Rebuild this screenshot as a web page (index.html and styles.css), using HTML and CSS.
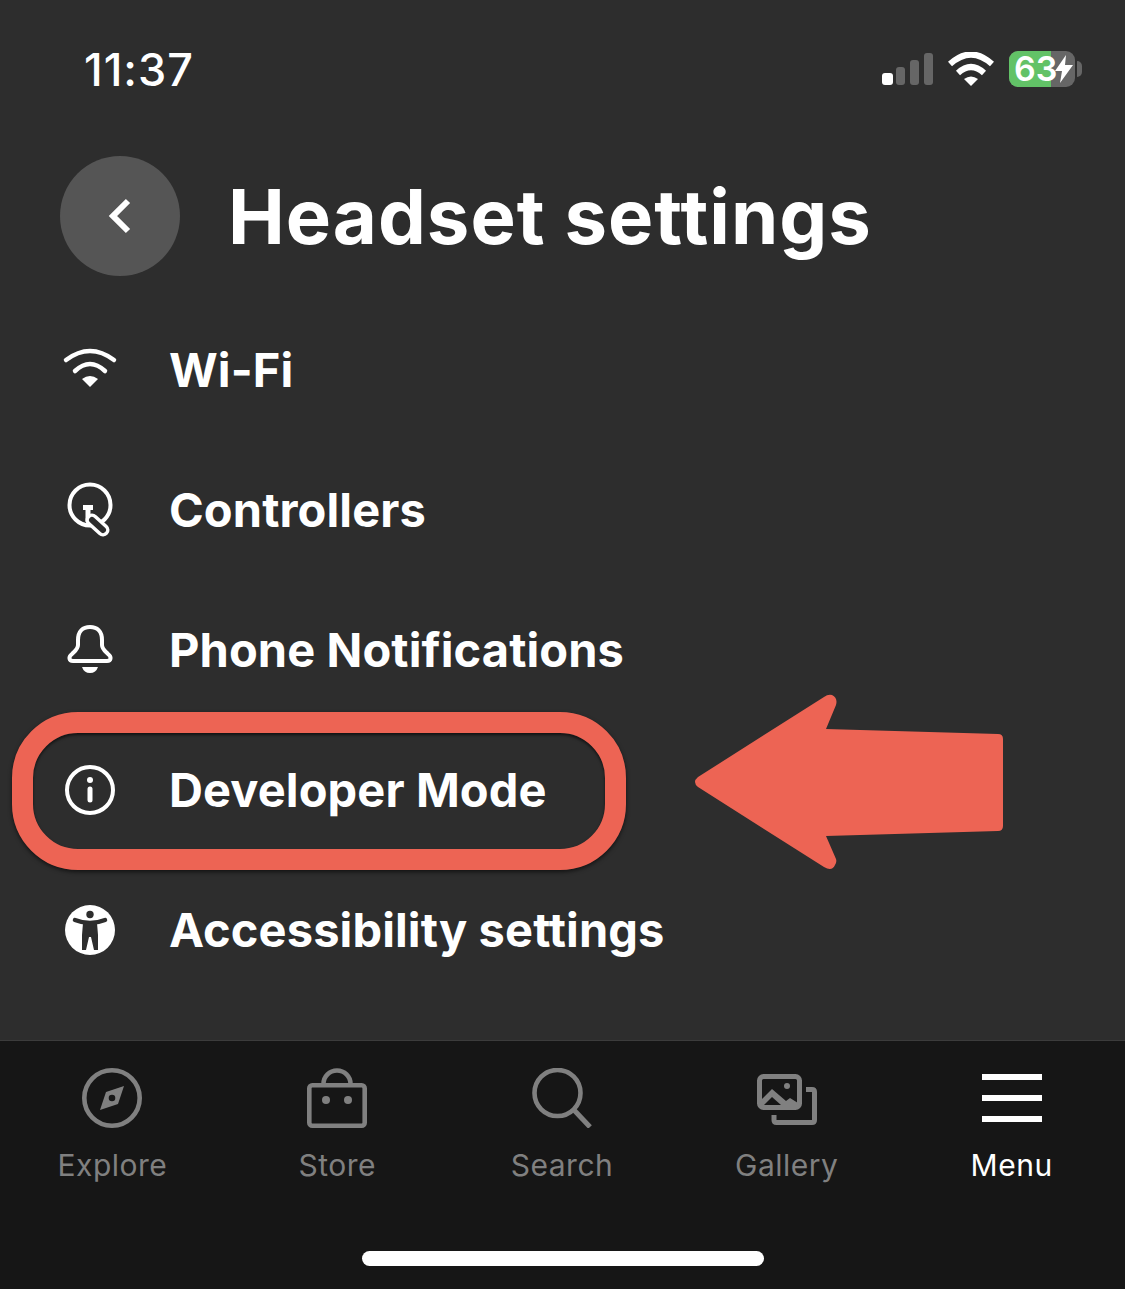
FILE: index.html
```html
<!DOCTYPE html>
<html>
<head>
    <title>Headset settings</title>
    <link rel="stylesheet" href="styles.css">
</head>
<body>
    <div class="page">
        <div class="status-bar">
            <span class="time">11:37</span>
            <div class="status-icons">
                <svg class="signal" width="51" height="32" viewBox="0 0 51 32">
                    <rect x="0" y="20" width="11" height="12" rx="3" fill="#fff"/>
                    <rect x="14" y="14" width="9" height="18" rx="3" fill="#666"/>
                    <rect x="28" y="7" width="9" height="25" rx="3" fill="#666"/>
                    <rect x="42" y="0" width="9" height="32" rx="3" fill="#666"/>
                </svg>
                <svg class="status-wifi" width="46" height="34" viewBox="0 0 46 34">
                    <path d="M2 12 Q23 -7 44 12" fill="none" stroke="#fff" stroke-width="6"/>
                    <path d="M10 21 Q23 9 36 21" fill="none" stroke="#fff" stroke-width="6"/>
                    <path d="M16 27 Q23 22 30 27 L23 34Z" fill="#fff"/>
                </svg>
                <div class="battery">
                    <div class="battery-fill" style="width: 63%"></div>
                    <span class="battery-text">63</span>
                    <svg class="bolt" width="18" height="28" viewBox="0 0 18 28">
                        <path d="M11 0 L0 16 H7 L5 28 L18 10 H10Z" fill="#fff"/>
                    </svg>
                </div>
            </div>
        </div>

        <div class="header">
            <div class="back-btn">
                <svg width="24" height="36" viewBox="0 0 24 36">
                    <path d="M20 3 L5 18 L20 33" fill="none" stroke="#fff" stroke-width="6"/>
                </svg>
            </div>
            <h1>Headset settings</h1>
        </div>

        <div class="settings-list">
            <div class="row">
                <svg class="row-icon" width="50" height="50" viewBox="0 0 50 50">
                    <path d="M1 15 Q25 -3 49 15" fill="none" stroke="#fff" stroke-width="4.5" stroke-linecap="round"/>
                    <path d="M10 26 Q25 12 40 26" fill="none" stroke="#fff" stroke-width="4.5" stroke-linecap="round"/>
                    <path d="M17 34 Q25 28 33 34 L25 42Z" fill="#fff"/>
                </svg>
                <span>Wi-Fi</span>
            </div>
            <div class="row">
                <svg class="row-icon" width="50" height="50" viewBox="0 0 50 50">
                    <circle cx="25" cy="20" r="20.5" fill="none" stroke="#fff" stroke-width="4"/>
                    <rect x="18" y="20" width="10" height="5" fill="#fff"/>
                    <rect x="20.5" y="25" width="5" height="12" fill="#fff"/>
                    <path d="M27 35 L38 45" stroke="#fff" stroke-width="13" stroke-linecap="round"/>
                    <path d="M27 35 L38 45" stroke="#2d2d2d" stroke-width="6" stroke-linecap="round"/>
                </svg>
                <span>Controllers</span>
            </div>
            <div class="row">
                <svg class="row-icon" width="50" height="50" viewBox="0 0 50 50">
                    <path d="M13 15 C13 6 18 2 25 2 C32 2 37 6 37 15 V20 C37 24 40 26 43 29 C47 32 46 36 42 36 H8 C4 36 3 32 7 29 C10 26 13 24 13 20Z" fill="none" stroke="#fff" stroke-width="4"/>
                    <path d="M17 42 H33 Q31 48 25 48 Q19 48 17 42Z" fill="#fff"/>
                </svg>
                <span>Phone Notifications</span>
            </div>
            <div class="row">
                <svg class="row-icon" width="50" height="50" viewBox="0 0 50 50">
                    <circle cx="25" cy="25" r="23" fill="none" stroke="#fff" stroke-width="4"/>
                    <circle cx="25" cy="15" r="3" fill="#fff"/>
                    <path d="M25 24 V35" stroke="#fff" stroke-width="5" stroke-linecap="round"/>
                </svg>
                <span>Developer Mode</span>
            </div>
            <div class="row">
                <svg class="row-icon" width="50" height="50" viewBox="0 0 50 50">
                    <circle cx="25" cy="25" r="25" fill="#fff"/>
                    <circle cx="25" cy="9.5" r="3.7" fill="#2d2d2d"/>
                    <path d="M10 15 Q25 21 40 15" fill="none" stroke="#2d2d2d" stroke-width="4.5" stroke-linecap="round"/>
                    <path d="M18 18 H32 L33 30 L33 45 H29 L26 32 H24 L21 45 H17 L17 30Z" fill="#2d2d2d"/>
                </svg>
                <span>Accessibility settings</span>
            </div>
        </div>

        <div class="tab-bar">
            <div class="tabs">
                <div class="tab">
                    <svg width="60" height="60" viewBox="0 0 60 60">
                        <circle cx="30" cy="30" r="27.7" fill="none" stroke="#808080" stroke-width="4.6"/>
                        <path fill-rule="evenodd" d="M42 18 L36 36 L18 42 L24 24Z M30 26.7 A3.3 3.3 0 1 0 30 33.3 A3.3 3.3 0 1 0 30 26.7Z" fill="#808080"/>
                    </svg>
                    <span>Explore</span>
                </div>
                <div class="tab">
                    <svg width="60" height="60" viewBox="0 0 60 60">
                        <rect x="2.3" y="17.3" width="55.4" height="40.4" rx="3" fill="none" stroke="#808080" stroke-width="4.6"/>
                        <path d="M16.5 16 A13.5 13.5 0 0 1 43.5 16" fill="none" stroke="#808080" stroke-width="4.6"/>
                        <circle cx="19" cy="32" r="4" fill="#808080"/>
                        <circle cx="41" cy="32" r="4" fill="#808080"/>
                    </svg>
                    <span>Store</span>
                </div>
                <div class="tab">
                    <svg width="60" height="60" viewBox="0 0 60 60">
                        <circle cx="25.5" cy="25" r="23" fill="none" stroke="#808080" stroke-width="4.6"/>
                        <path d="M42 42 L58 59" stroke="#808080" stroke-width="5"/>
                    </svg>
                    <span>Search</span>
                </div>
                <div class="tab">
                    <svg width="60" height="60" viewBox="0 0 60 60">
                        <rect x="2.5" y="8.5" width="40" height="31" rx="4" fill="none" stroke="#808080" stroke-width="5"/>
                        <path d="M17 47 V52 Q17 54.5 19.5 54.5 H55 Q57.5 54.5 57.5 52 V24 Q57.5 21.5 55 21.5 H49" fill="none" stroke="#808080" stroke-width="5"/>
                        <path d="M5 31 L15 21 L29 33 L33 30 L41 35 V37 H5Z" fill="#808080"/>
                        <path d="M7 37 L15 29 L24 37Z" fill="#161616"/>
                        <circle cx="30" cy="18" r="3" fill="#808080"/>
                    </svg>
                    <span>Gallery</span>
                </div>
                <div class="tab active">
                    <svg width="60" height="60" viewBox="0 0 60 60">
                        <rect x="0" y="6" width="60" height="6" fill="#fff"/>
                        <rect x="0" y="27" width="60" height="6" fill="#fff"/>
                        <rect x="0" y="48" width="60" height="6" fill="#fff"/>
                    </svg>
                    <span>Menu</span>
                </div>
            </div>
            <div class="home-indicator"></div>
        </div>

        <!-- annotation drawn over the screenshot -->
        <div class="highlight-ring"></div>
        <svg class="arrow" width="320" height="190" viewBox="0 0 320 190">
            <path d="M6 82 Q0 87 6 92 L132 172 Q140 177 143 170 Q145 167 144 164 L134 141 L306 136 Q311 136 311 131 V44 Q311 39 306 39 L134 34 L144 10 Q146 3 140 0 Q136 -1 132 2Z" fill="#ed6454"/>
        </svg>
    </div>
</body>
</html>
```

FILE: styles.css
```css
* {
    box-sizing: border-box;
}
body {
    margin: 0;
    background: #2d2d2d;
    font-family: Inter, "Liberation Sans", sans-serif;
    color: #fff;
}
.page {
    position: relative;
    display: flex;
    flex-direction: column;
    width: 1125px;
    height: 1289px;
    overflow: hidden;
}
.status-bar {
    display: flex;
    align-items: center;
    justify-content: space-between;
    height: 138px;
    padding: 0 43px 0 84px;
}
.time {
    font-size: 45px;
    font-weight: 500;
    letter-spacing: 1px;
}
.status-icons {
    display: flex;
    align-items: center;
    gap: 15px;
}
.battery {
    position: relative;
    display: flex;
    align-items: center;
    width: 66px;
    height: 36px;
    margin-right: 7px;
    background: #666;
    border-radius: 9px;
}
.battery::after {
    content: "";
    position: absolute;
    left: 68px;
    top: 10px;
    width: 5px;
    height: 16px;
    background: #666;
    border-radius: 0 5px 5px 0;
}
.battery-fill {
    position: absolute;
    left: 0;
    top: 0;
    bottom: 0;
    background: #62c267;
    border-radius: 9px 0 0 9px;
}
.battery-text {
    position: relative;
    padding-left: 5px;
    font-size: 34px;
    font-weight: 600;
    line-height: 36px;
}
.bolt {
    position: absolute;
    left: 46px;
    top: 4px;
}
.header {
    display: flex;
    align-items: center;
    gap: 48px;
    margin: 18px 0 24px;
    padding-left: 60px;
}
.back-btn {
    display: flex;
    align-items: center;
    justify-content: center;
    width: 120px;
    height: 120px;
    background: #555;
    border-radius: 50%;
}
h1 {
    margin: 0;
    font-size: 76px;
    font-weight: 700;
    letter-spacing: 1px;
}
.settings-list {
    flex: 1;
}
.row {
    display: flex;
    align-items: center;
    gap: 54px;
    height: 140px;
    padding-left: 65px;
    font-size: 47px;
    font-weight: 650;
    letter-spacing: 0.1px;
}
.row span {
    margin-bottom: 2px;
}
.row-icon {
    flex: none;
    overflow: visible;
}
.tab-bar {
    display: flex;
    flex-direction: column;
    align-items: center;
    height: 249px;
    padding-bottom: 23px;
    background: #161616;
    border-top: 1px solid #3c3c3c;
}
.tabs {
    display: grid;
    grid-template-columns: repeat(5, 1fr);
    width: 100%;
    padding: 27px 1px 0 0;
}
.tab {
    display: flex;
    flex-direction: column;
    align-items: center;
    gap: 19px;
    font-size: 30px;
    line-height: 36px;
    letter-spacing: 0.5px;
    color: #808080;
}
.tab.active {
    color: #fff;
}
.home-indicator {
    width: 402px;
    height: 15px;
    margin-top: auto;
    background: #fff;
    border-radius: 8px;
}
.highlight-ring {
    position: absolute;
    left: 12px;
    top: 712px;
    width: 614px;
    height: 158px;
    border: 21px solid #ed6454;
    border-radius: 66px;
    box-shadow: 0 2px 4px rgba(0, 0, 0, 0.6), inset 0 2px 3px rgba(0, 0, 0, 0.6);
}
.arrow {
    position: absolute;
    left: 692px;
    top: 695px;
    overflow: visible;
}
```
